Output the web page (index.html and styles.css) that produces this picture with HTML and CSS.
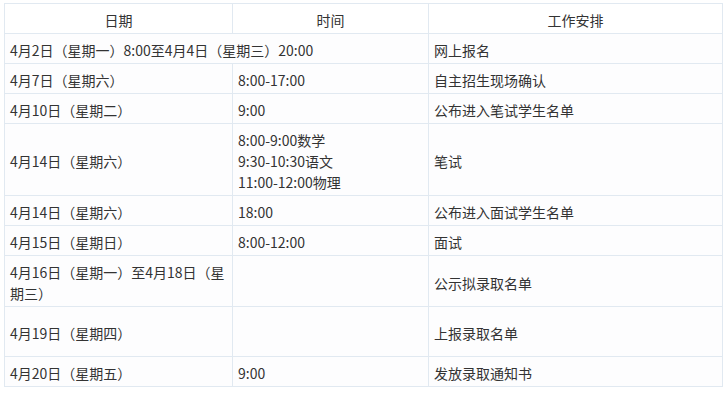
FILE: index.html
```html
<!DOCTYPE html>
<html lang="zh-CN">
<head>
<meta charset="utf-8">
<title>日程安排</title>
<link rel="stylesheet" href="styles.css">
</head>
<body>
<table class="schedule">
  <colgroup>
    <col class="c-date">
    <col class="c-time">
    <col class="c-work">
  </colgroup>
  <thead>
    <tr><th>日期</th><th>时间</th><th>工作安排</th></tr>
  </thead>
  <tbody>
    <tr><td colspan="2">4月2日（星期一）8:00至4月4日（星期三）20:00</td><td>网上报名</td></tr>
    <tr><td>4月7日（星期六）</td><td>8:00-17:00</td><td>自主招生现场确认</td></tr>
    <tr><td>4月10日（星期二）</td><td>9:00</td><td>公布进入笔试学生名单</td></tr>
    <tr><td>4月14日（星期六）</td><td>8:00-9:00数学<br>9:30-10:30语文<br>11:00-12:00物理</td><td>笔试</td></tr>
    <tr><td>4月14日（星期六）</td><td>18:00</td><td>公布进入面试学生名单</td></tr>
    <tr><td>4月15日（星期日）</td><td>8:00-12:00</td><td>面试</td></tr>
    <tr><td>4月16日（星期一）至4月18日（星期三）</td><td></td><td>公示拟录取名单</td></tr>
    <tr class="tall"><td>4月19日（星期四）</td><td></td><td>上报录取名单</td></tr>
    <tr><td>4月20日（星期五）</td><td>9:00</td><td>发放录取通知书</td></tr>
  </tbody>
</table>
</body>
</html>
```

FILE: styles.css
```css
html, body {
  margin: 0;
  padding: 0;
  background: #ffffff;
}
body {
  padding: 3px 0 0 4px;
  font-family: "Noto Sans CJK SC", "Noto Sans", sans-serif;
  font-size: 14px;
  color: #333333;
}
.schedule {
  border-collapse: collapse;
  table-layout: fixed;
  width: 718px;
  background: #fdfdfe;
}
.c-date { width: 228px; }
.c-time { width: 196px; }
.c-work { width: 294px; }
.schedule th,
.schedule td {
  border: 1px solid #e1e9f1;
  padding: 6px 5px 2px;
  line-height: 21px;
  vertical-align: middle;
  text-align: left;
  font-weight: normal;
}
.schedule th {
  text-align: center;
  background: #ffffff;
}
.schedule tr.tall td {
  height: 41px;
}
```
